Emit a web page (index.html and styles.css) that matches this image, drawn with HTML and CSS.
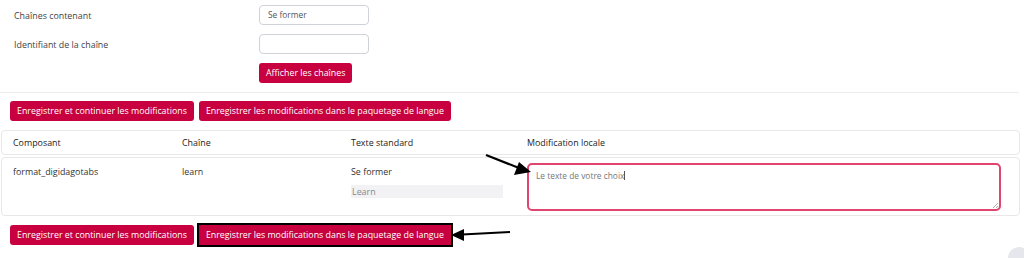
FILE: index.html
```html
<!DOCTYPE html>
<html lang="fr">
<head>
<meta charset="utf-8">
<link rel="stylesheet" href="styles.css">
</head>
<body>
<div class="page">
  <form class="filters">
    <label class="flabel">Chaînes contenant</label>
    <div class="input">Se former</div>
    <label class="flabel">Identifiant de la chaîne</label>
    <div class="input"></div>
    <span></span>
    <div><button type="button" class="btn">Afficher les chaînes</button></div>
  </form>
  <div class="sep"></div>
  <div class="actions">
    <button type="button" class="btn">Enregistrer et continuer les modifications</button>
    <button type="button" class="btn">Enregistrer les modifications dans le paquetage de langue</button>
  </div>
  <div class="table">
    <div class="row head">
      <div class="c1">Composant</div>
      <div class="c2">Chaîne</div>
      <div class="c3">Texte standard</div>
      <div class="c4">Modification locale</div>
    </div>
    <div class="row body">
      <div class="c1">format_digidagotabs</div>
      <div class="c2">learn</div>
      <div class="c3">
        <div>Se former</div>
        <div class="orig">Learn</div>
      </div>
      <div class="c4"><div class="ta">Le texte de votre choix<span class="caret"></span><span class="grip"></span></div></div>
    </div>
  </div>
  <div class="actions bottom">
    <button type="button" class="btn">Enregistrer et continuer les modifications</button>
    <button type="button" class="btn focus">Enregistrer les modifications dans le paquetage de langue</button>
  </div>
  <svg class="arrows" width="1024" height="258" viewBox="0 0 1024 258">
    <line x1="486" y1="155" x2="519" y2="168" stroke="#000" stroke-width="2.2"/>
    <polygon points="531,172 514,175 519,162" fill="#000"/>
    <line x1="510" y1="232" x2="462" y2="234.5" stroke="#000" stroke-width="2.2"/>
    <polygon points="451,235 464,229 464,241" fill="#000"/>
  </svg>
  <div class="fab"></div>
</div>
</body>
</html>
```
FILE: styles.css
```css
* { box-sizing: border-box; }
html, body { margin: 0; padding: 0; background: #fff; }
body {
  font-family: "Open Sans", "DejaVu Sans", sans-serif;
  font-size: 8.9px;
  color: #333;
  width: 1024px;
  height: 258px;
  overflow: hidden;
}
.page { position: relative; width: 1024px; height: 258px; }
.filters {
  display: grid;
  grid-template-columns: 245px 110px;
  row-gap: 9px;
  padding: 5px 0 0 14px;
  align-items: center;
}
.flabel { color: #444; }
.input {
  height: 20px;
  border: 1px solid #cfd2d8;
  border-radius: 4px;
  padding: 0 8px;
  line-height: 18px;
  color: #555;
  font-size: 8.4px;
}
.btn {
  font-family: inherit;
  font-size: 8.85px;
  color: #fff;
  background: #c8003f;
  border: 0;
  border-radius: 3px;
  height: 20px;
  padding: 0 7px;
  line-height: 20px;
  cursor: pointer;
}
.sep {
  margin-top: 9px;
  height: 1px;
  background: #ececec;
  width: 1019px;
}
.actions {
  display: flex;
  gap: 5px;
  padding: 8px 0 0 10px;
}
.table {
  margin: 9px 0 0 1px;
  width: 1019px;
  display: flex;
  flex-direction: column;
  gap: 2px;
}
.row {
  display: grid;
  grid-template-columns: 169px 169px 178px 1fr;
  padding-left: 11px;
  padding-right: 18px;
  border: 1px solid #e8e8e8;
  border-radius: 4px;
}
.head { height: 25px; align-items: center; color: #222; }
.body { height: 59px; padding-top: 7px; align-items: start; }
.orig {
  margin-top: 7px;
  width: 152px;
  height: 13px;
  line-height: 13px;
  background: #f2f2f4;
  color: #888;
  padding-left: 1px;
}
.c4 { margin-left: -2px; }
.ta {
  position: relative;
  margin-top: -2px;
  height: 48px;
  border: 2px solid #e0456f;
  border-radius: 5px;
  padding: 5px 7px;
  color: #777;
  font-size: 8.4px;
}
.caret { display: inline-block; width: 1px; height: 9px; background: #555; vertical-align: -1px; }
.grip {
  position: absolute; right: 1px; bottom: 1px; width: 5px; height: 5px;
  background: linear-gradient(135deg, transparent 45%, #aaa 46%, #aaa 55%, transparent 56%, transparent 75%, #aaa 76%, #aaa 85%, transparent 86%);
}
.bottom { padding-top: 9px; }
.focus { border-radius: 0; outline: 2px solid #000; outline-offset: 0; }
.arrows { position: absolute; left: 0; top: 0; pointer-events: none; }
.fab {
  position: absolute; left: 1008px; top: 247px; width: 22px; height: 22px;
  border-radius: 50%; background: #e6e7ec;
}
```
